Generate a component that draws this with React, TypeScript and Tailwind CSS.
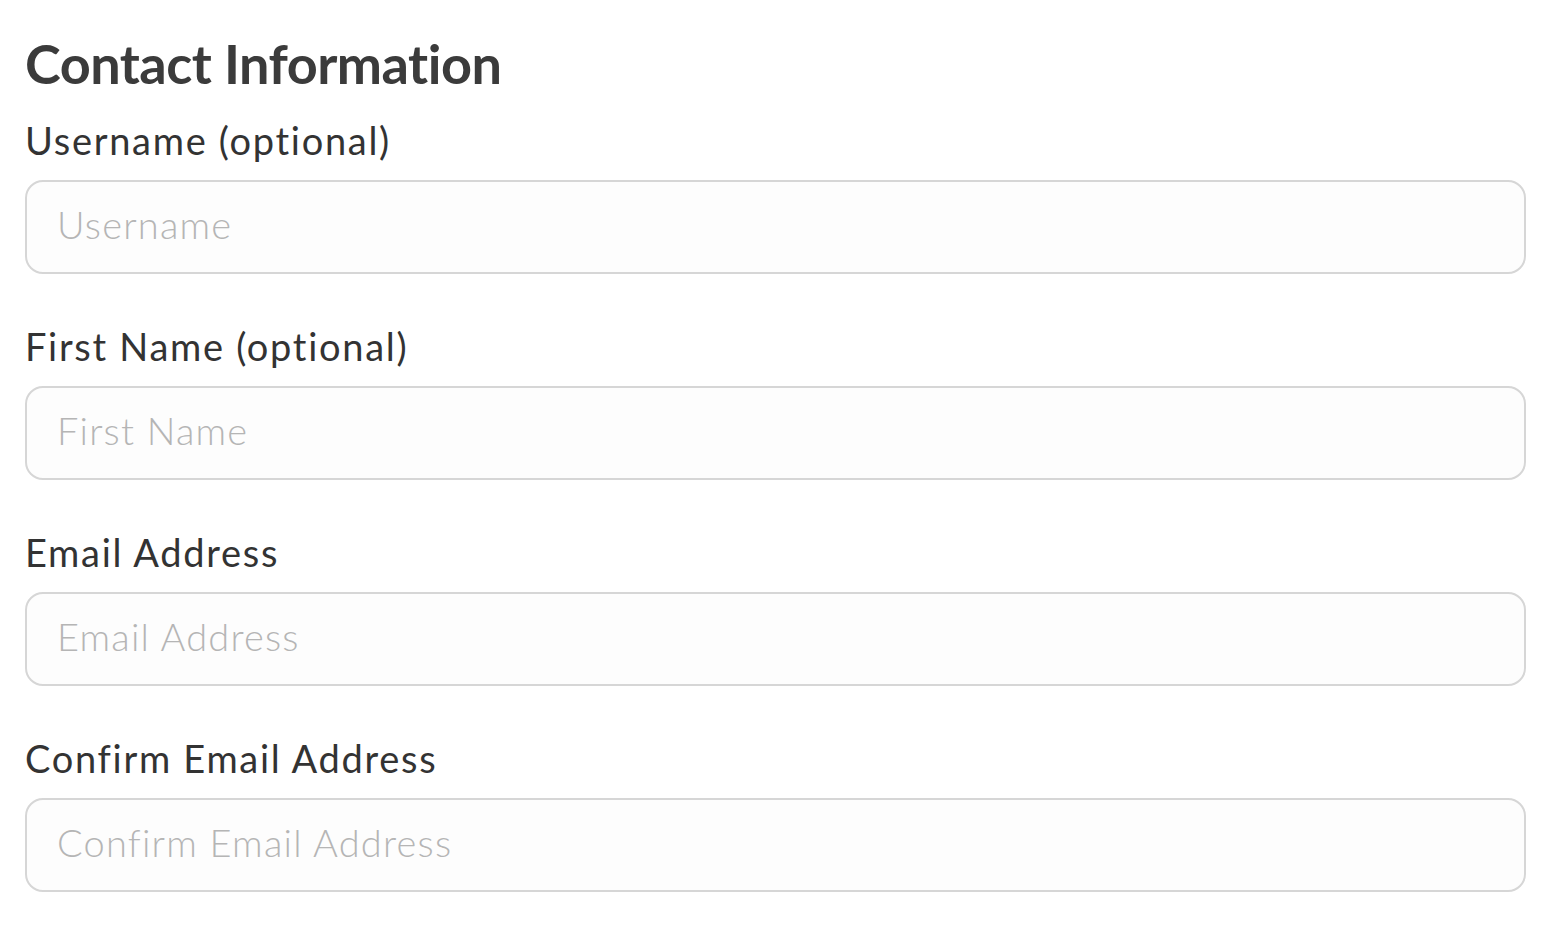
import React from 'react';

const FIELDS = [
  { id: 'username', label: 'Username (optional)', placeholder: 'Username', type: 'text' },
  { id: 'firstName', label: 'First Name (optional)', placeholder: 'First Name', type: 'text' },
  { id: 'email', label: 'Email Address', placeholder: 'Email Address', type: 'email' },
  { id: 'confirmEmail', label: 'Confirm Email Address', placeholder: 'Confirm Email Address', type: 'email' },
];

export default function App() {
  return (
    <div className="min-h-screen bg-white pl-[25px] pr-[26px] pt-[34px] font-['Lato',sans-serif]">
      <h2 className="text-[54px] leading-[60px] font-bold tracking-[-0.5px] text-[#3b3b3b] mb-[26px]">Contact Information</h2>
      <div className="flex flex-col gap-[52px]">
        {FIELDS.map((f) => (
          <div key={f.id} className="flex flex-col gap-[20px]">
            <label htmlFor={f.id} className="text-[38px] leading-[40px] tracking-[1.7px] text-[#333333]">
              {f.label}
            </label>
            <input
              id={f.id}
              type={f.type}
              placeholder={f.placeholder}
              className="h-[94px] w-full rounded-[18px] border-2 border-[#d6d6d6] bg-[#fdfdfd] pl-[30px] pr-[30px] pb-[6px] text-[38px] font-light tracking-[1.2px] text-[#333333] placeholder:text-[#b5b5b5] outline-none"
            />
          </div>
        ))}
      </div>
    </div>
  );
}
